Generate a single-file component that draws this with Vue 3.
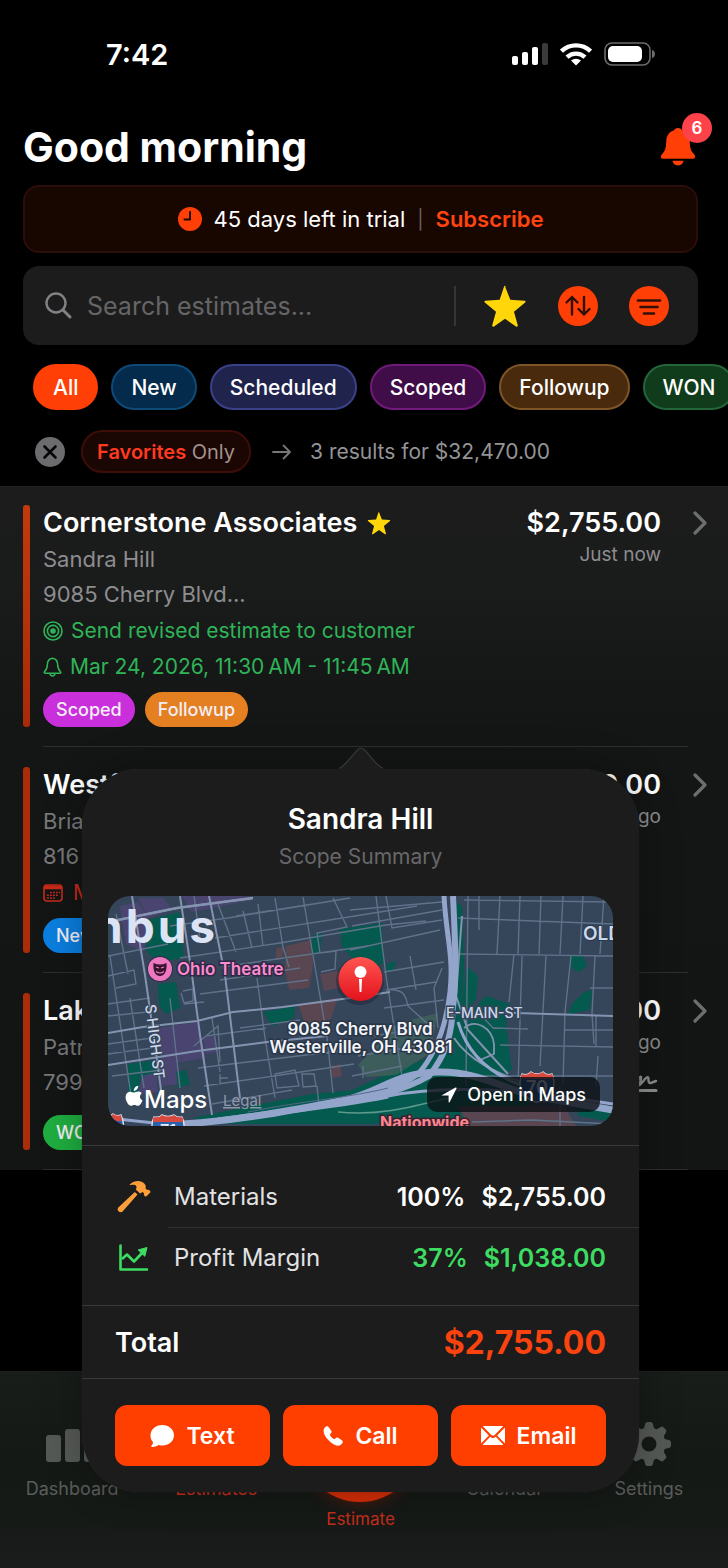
<script setup>
import { ref } from 'vue'

const query = ref('')

const filters = [
  { label: 'All', tone: 'all' },
  { label: 'New', tone: 'new' },
  { label: 'Scheduled', tone: 'scheduled' },
  { label: 'Scoped', tone: 'scoped' },
  { label: 'Followup', tone: 'followup' },
  { label: 'WON', tone: 'won' }
]

const estimates = [
  {
    company: 'Cornerstone Associates',
    favorite: true,
    contact: 'Sandra Hill',
    address: '9085 Cherry Blvd...',
    goal: 'Send revised estimate to customer',
    reminder: 'Mar 24, 2026, 11:30\u2009AM - 11:45\u2009AM',
    price: '$2,755.00',
    age: 'Just now',
    tags: [
      { label: 'Scoped', tone: 'scoped' },
      { label: 'Followup', tone: 'followup' }
    ]
  },
  {
    company: 'Westfield',
    contact: 'Brian',
    address: '816 Oak',
    due: 'Mar 24',
    price: '$9,120.00',
    age: '1 day ago',
    tags: [{ label: 'New', tone: 'new' }]
  },
  {
    company: 'Lakeside',
    contact: 'Patrick',
    address: '799 Elm',
    signed: true,
    price: '$20,595.00',
    age: '2 days ago',
    tags: [{ label: 'WON', tone: 'won' }]
  }
]

const starPath =
  'M12 1.2 14.9 8.6 22.8 9.1Q23.6 9.4 23 10.1L16.9 15.1 19 22.7Q18.9 23.6 18 23.2L12 19 6 23.2Q5.1 23.6 5 22.7L7.1 15.1 1 10.1Q.4 9.4 1.2 9.1L9.1 8.6 11.4 1.6Q12 .4 12.6 1.6Z'
</script>

<template>
  <div class="screen">
    <header class="status">
      <time class="clock">7:42</time>
      <div class="status-icons">
        <svg width="36" height="22" viewBox="0 0 36 22" aria-hidden="true">
          <rect x="0" y="13" width="6" height="9" rx="2" fill="#fff" />
          <rect x="10" y="9" width="6" height="13" rx="2" fill="#fff" />
          <rect x="20" y="4" width="6" height="18" rx="2" fill="#fff" />
          <rect x="30" y="0" width="6" height="22" rx="2" fill="#3a3a3a" />
        </svg>
        <svg width="32" height="24" viewBox="0 0 32 24" aria-hidden="true">
          <g fill="none" stroke="#fff" stroke-width="4.4">
            <path d="M1.5 9.2a21 21 0 0 1 29 0" />
            <path d="M7 15.2a13 13 0 0 1 18 0" />
          </g>
          <path d="M16 23.5 11 18.6a7.4 7.4 0 0 1 10 0z" fill="#fff" />
        </svg>
        <svg width="51" height="24" viewBox="0 0 51 24" aria-hidden="true">
          <rect x="1" y="1" width="45" height="22" rx="7" fill="none" stroke="#6b6b6b" stroke-width="1.6" />
          <rect x="4" y="4" width="34" height="16" rx="5" fill="#fff" />
          <path d="M48 8c4 1 4 7 0 8z" fill="#6b6b6b" />
        </svg>
      </div>
    </header>

    <div class="top">
      <div class="heading">
        <h1>Good morning</h1>
        <button class="bell" type="button" aria-label="Notifications, 6 unread">
          <svg width="34" height="38" viewBox="0 0 34 38" aria-hidden="true">
            <path d="M17 0c2.400 0 3.400 1 3.800 2.200 5 1.400 7.700 5.400 7.900 10.800.3 7.500 1.200 10 4.200 13 2.200 2.300 1.200 4.700-1.600 4.700H2.700c-2.800 0-3.800-2.400-1.600-4.700 3-3 3.900-5.500 4.200-13 .2-5.400 2.900-9.400 7.900-10.800C13.600 1 14.600 0 17 0z" />
            <path d="M11.500 32.800h11c-.4 2.800-2.600 4.700-5.500 4.700s-5.100-1.900-5.500-4.700z" />
          </svg>
          <span class="badge">6</span>
        </button>
      </div>

      <div class="trial">
        <svg width="24" height="24" viewBox="0 0 24 24" aria-hidden="true">
          <circle cx="12" cy="12" r="12" fill="#ff3f05" />
          <path d="M12 5v7.500H6.500" fill="none" stroke="#1a0700" stroke-width="2" stroke-linecap="round" stroke-linejoin="round" />
        </svg>
        <span>45 days left in trial</span>
        <span class="trial-bar">|</span>
        <a href="#subscribe">Subscribe</a>
      </div>

      <div class="search">
        <svg width="27" height="27" viewBox="0 0 27 27" aria-hidden="true">
          <circle cx="11" cy="11" r="9.500" fill="none" stroke="#828286" stroke-width="2.400" />
          <path d="m18 18 7 7" stroke="#828286" stroke-width="3" stroke-linecap="round" />
        </svg>
        <input v-model="query" type="text" placeholder="Search estimates..." aria-label="Search estimates" />
        <div class="search-tools">
          <button type="button" aria-label="Favorites">
            <svg width="44" height="44" viewBox="0 0 24 24"><path :d="starPath" fill="#ffd60a" /></svg>
          </button>
          <button type="button" aria-label="Sort">
            <svg width="40" height="40" viewBox="0 0 40 40">
              <circle cx="20" cy="20" r="20" fill="#ff3f05" />
              <path d="M14 28.500V11m-5.500 5.500L14 11l5.500 5.500M26 11v17.500m-5.500-5.500 5.500 5.500 5.500-5.500" fill="none" stroke="#321008" stroke-width="2.400" stroke-linecap="round" stroke-linejoin="round" />
            </svg>
          </button>
          <button type="button" aria-label="Filter">
            <svg width="40" height="40" viewBox="0 0 40 40">
              <circle cx="20" cy="20" r="20" fill="#ff3f05" />
              <path d="M9 14.500h22M11.500 21h17M15 27.500h10" fill="none" stroke="#321008" stroke-width="2.600" stroke-linecap="round" />
            </svg>
          </button>
        </div>
      </div>
    </div>

    <nav class="chips" aria-label="Status filters">
      <button v-for="f in filters" :key="f.label" type="button" class="chip" :class="'chip-' + f.tone">{{ f.label }}</button>
    </nav>

    <div class="active-filter">
      <button class="clear" type="button" aria-label="Clear filter">
        <svg width="30" height="30" viewBox="0 0 30 30">
          <circle cx="15" cy="15" r="15" fill="#6c6c6e" />
          <path d="m9.500 9.500 11 11m0-11-11 11" stroke="#050505" stroke-width="2.600" stroke-linecap="round" />
        </svg>
      </button>
      <button class="fav-only" type="button"><b>Favorites</b> Only</button>
      <svg class="arrow" width="20" height="16" viewBox="0 0 20 16" aria-hidden="true">
        <path d="M1 8h17m-6.500-6.500L18 8l-6.500 6.500" fill="none" stroke="#77777a" stroke-width="1.800" stroke-linecap="round" stroke-linejoin="round" />
      </svg>
      <span>3 results for $32,470.00</span>
    </div>

    <main class="list">
      <article v-for="e in estimates" :key="e.company" class="row">
        <div class="row-inner">
          <div class="accent"></div>
          <div class="info">
            <h2>
              {{ e.company }}
              <svg v-if="e.favorite" width="24" height="24" viewBox="0 0 24 24" aria-label="Favorite"><path :d="starPath" fill="#ffd60a" /></svg>
            </h2>
            <p class="contact">{{ e.contact }}</p>
            <p class="address">{{ e.address }}</p>
            <p v-if="e.goal" class="meta">
              <svg width="20" height="20" viewBox="0 0 20 20" fill="none" stroke="currentColor" stroke-width="1.600" aria-hidden="true">
                <circle cx="10" cy="10" r="9" /><circle cx="10" cy="10" r="5.600" /><circle cx="10" cy="10" r="2" fill="currentColor" />
              </svg>
              {{ e.goal }}
            </p>
            <p v-if="e.reminder" class="meta">
              <svg width="19" height="20" viewBox="0 0 19 20" fill="none" stroke="currentColor" stroke-width="1.500" stroke-linejoin="round" aria-hidden="true">
                <path d="M9.500 1.200c-3.200.5-5 2.700-5.100 6-.1 4.200-.8 5.500-2.900 7.600-.6.700-.2 1.400.6 1.400h14.800c.8 0 1.200-.7.6-1.400-2.100-2.100-2.800-3.400-2.900-7.600-.1-3.300-1.900-5.500-5.100-6zM7 16.500c.3 3.300 4.700 3.300 5 0" />
              </svg>
              {{ e.reminder }}
            </p>
            <p v-if="e.due" class="meta due">
              <svg width="20" height="18" viewBox="0 0 20 18" aria-hidden="true">
                <rect x="1" y="1" width="18" height="16" rx="3" fill="none" stroke="currentColor" stroke-width="1.600" />
                <path d="M1 3.500h18" stroke="currentColor" stroke-width="3.600" />
                <path d="M7 8.500h10M4 11.200h12M4 14h9" stroke="currentColor" stroke-width="1.400" stroke-dasharray="1.800 1.200" />
              </svg>
              {{ e.due }}
            </p>
            <div class="tags" :class="{ spaced: e.signed }">
              <span v-for="t in e.tags" :key="t.label" class="tag" :class="'tag-' + t.tone">{{ t.label }}</span>
            </div>
          </div>
          <div class="amount">
            <strong>{{ e.price }}</strong>
            <span>{{ e.age }}</span>
            <svg v-if="e.signed" width="28" height="20" viewBox="0 0 28 20" aria-label="Signed">
              <path d="M1 11 6 4q2.500-3 2 .5L6.500 11q3-2.500 5.500-6 3-3.500 3.500-.5-.5 5 2.500 4.500 2-1 5-2" fill="none" stroke="#8d8d90" stroke-width="2.400" stroke-linecap="round" stroke-linejoin="round" />
              <path d="M1 16.500h22" stroke="#8d8d90" stroke-width="3" stroke-linecap="round" />
            </svg>
          </div>
          <button class="chevron" type="button" :aria-label="'Open ' + e.company">
            <svg width="14" height="24" viewBox="0 0 14 24"><path d="m2 2 10 10L2 22" fill="none" stroke="#6d6e6e" stroke-width="3.200" stroke-linecap="round" stroke-linejoin="round" /></svg>
          </button>
        </div>
      </article>
    </main>

    <nav class="tabs" aria-label="Main">
      <a class="tab" href="#dashboard">
        <svg width="56" height="40" viewBox="0 0 56 40" aria-hidden="true">
          <rect x="2" y="11" width="15" height="27" rx="3" /><rect x="21" y="5" width="15" height="33" rx="3" /><rect x="40" y="0" width="15" height="38" rx="3" />
        </svg>
        <span>Dashboard</span>
      </a>
      <a class="tab current" href="#estimates">
        <svg width="40" height="40" viewBox="0 0 40 40" aria-hidden="true"><rect x="6" y="2" width="28" height="36" rx="4" /></svg>
        <span>Estimates</span>
      </a>
      <a class="tab create" href="#estimate">
        <i class="orb"></i>
        <span>Estimate</span>
      </a>
      <a class="tab" href="#calendar">
        <svg width="40" height="40" viewBox="0 0 40 40" aria-hidden="true"><rect x="3" y="4" width="34" height="32" rx="5" /></svg>
        <span>Calendar</span>
      </a>
      <a class="tab" href="#settings">
        <svg width="44" height="44" viewBox="-22 -22 44 44" aria-hidden="true">
          <g>
            <path v-for="n in 8" :key="n" :transform="'rotate(' + n * 45 + ')'" d="M-5.500-14-3.700-20.500Q-3.200-22-1.600-22h3.200q1.600 0 2.100 1.500L5.500-14z" />
          </g>
          <path fill-rule="evenodd" d="M0-16.500a16.500 16.500 0 1 1 0 33 16.500 16.500 0 1 1 0-33zm0 9a7.500 7.500 0 1 0 0 15 7.500 7.500 0 1 0 0-15z" />
        </svg>
        <span>Settings</span>
      </a>
    </nav>

    <section class="popover" aria-label="Scope summary">
      <svg class="pointer" width="48" height="23" viewBox="0 0 48 23" aria-hidden="true">
        <path d="M0 23C4 22 6 19 9 16L20 3.500q4-4.500 8 0L39 16c3 3 5 6 9 7z" fill="#1c1c1c" />
        <path d="M2 21.500C5 20 7 18 9 16L20 3.500q4-4.500 8 0L39 16c2 2 4 4 7 5.500" fill="none" stroke="#343635" stroke-width="1.200" />
      </svg>
      <h3>Sandra Hill</h3>
      <p class="sub">Scope Summary</p>

      <div class="map">
        <svg class="map-art" viewBox="0 0 505 230" preserveAspectRatio="xMidYMid slice" role="img" aria-label="Map of 9085 Cherry Blvd">
          <rect width="505" height="230" fill="#35455a" />
          <g fill="#4a4570">
            <path d="M12 10 30 6 40 22 36 56 18 48 14 26zM30 2h26l8 12-24 8zM74 0h62l8 4-60 12zM50 132l40-6 8 36-44 7zM95 141l12-1 3 16-12 2z" />
            <path d="M50 165l18-3 2 26-16 2zM28 176l20-2 2 22-22 2z" />
          </g>
          <g fill="#045a4e">
            <path d="M40 24 72 16 76 62 48 66 38 54zM50 88l18-2 4 26-14 6-7-8zM20 168l28-4 2 12-16 4-6 24-8-2zM68 176l10-2 4 14-12 4zM155 116l32-6-1 12-22 8zM204 40l10-3-2 20-8 2z" />
            <path d="M232 33l42-6 2 40-20 8-22-24zM278 68l10-3-2 10-7 2zM348 6l6 4 2 56-2 60 24-26 24 8-4 20 6 46-40 14-20-40zM358 70l12 10-2 24-14 14zM463 60l12 0 4 10-8 6-8-4zM476 96l8-2-2 20-22 4 4-10z" />
            <path d="M356 128l22-4 20 26-8 16-26-2zM84 222l60-12 60-12 40-4 30-14 60-24 30 0 50 32 10 26-60 6-70 8H124l-20-2z" />
            <path d="M470 208l35 4v14l-35-6z" />
          </g>
          <g fill="#40635c"><path d="M290 127l40-10-8 40-34 22-30 2-8-12z" opacity=".8" /></g>
          <g fill="#594651">
            <path d="M178 50l25-6 2 26-4 22-20 2-4-20zM168 52l8-1-2 12-6 1zM212 78l18-3 6 16-20 4zM190 108l40-6-8 22-24 6zM222 170l10-2 2 12-9 2z" />
            <path d="M350 210h106l12 20H360z" />
          </g>
          <g fill="none" stroke="#5f7289" stroke-width="1.400">
            <path d="M0 60 60 48M0 80l26-6 2 14-20 4M2 60l6 40 16 106M8 18l12 60M0 108l42-6M0 120l40-4M22 102l14 90M0 148l44-6M0 158l44-6M4 180l50-6M62 30l58-8 122-20M72 62l100-15 70-12 36-6 40-4M107 42l140-22 62-10M120 70l140-20M92 98l108-14M75 95l10-2 0 12-9 2-3-10M76 108l20-2M112 84l80-12M86 150 110 130l2 36M98 140l60-8M104 122l8 54M90 172l150-18M96 190l70-10 80-12M104 208l80-14M112 178v10m0-6h8M132 132l60-8M149 82l8 60 10 60M167 2l8 49 6 20M195 1l12 70 12 70 6 56M225 2l14 29-30 6 3 20 16-2-1 18-14 3M110 8l18 48M135 15l9 37M86 0l6 44M150 8l5 42M62 102l10 90M128 20l90-14" />
            <path d="M167 178l20-4 4 16-22 2zM194 178h12l2 12-13 1zM209 190l2 20" />
            <path d="M242 14 334 6M244 30 334 14M242 54l90-20M268 0l10 80 16 100M278 0l6 32 50-8M276 76l60-10M278 94l50-8M302 60l6 34M276 112l60-8M266 140l60-10M250 160l60-10M244 180l50-10M255 170v12M334 72l-8 20 4 40M278 94c18-2 20 6 22 16l22 20" />
            <path d="M350 22l155 6M350 58l155 2M360 0l-2 190M371 0v34M392 0l-3 58M412 0l-2 58M433 0l-2 58M455 0l-3 58M475 0l-3 58M496 0l-4 58M406 58l-5 48M414 60l-4 130M438 60l-6 110M463 60l-6 56-2 72M487 60l-3 58 2 30M482 92h23M356 4l149 2M392 149l113 2M386 132l34 1M370 116l16 17M456 134h50M488 120v30M490 160l-2 30M350 180h155M364 226l60-2 80 4M452 190v40" />
          </g>
          <g fill="none" stroke="#8494b0" stroke-width="2.400">
            <path d="M24 0l13 79 10 70 8 60M72 0l12 79 8 60 12 80M101 0l16 79 15 123M0 26l69-14 76-10M0 137l35-6 54-6 36-9 50-5 67-9 40-6M0 169l89-14 70-9 60-6M376 116l129 4M354 20l-6 80 12 34 40 44M346 142c20 30 60 40 76 48" stroke-width="2" />
            <path d="M0 26l69-14 76-10" />
            <path d="M356 132c12-10 28 0 30 16v10l-14 6" stroke-width="1.800" />
          </g>
          <g fill="none" stroke="#93a5cb">
            <path d="M336 0c2 40 10 60 6 96-4 34-14 62-32 82-18 14-50 24-84 28" stroke-width="5" />
            <path d="M345 0c2 40 4 80 0 112-2 34-10 50-24 68-24 14-60 24-95 27" stroke-width="6" />
            <path d="M75 228c60-4 110-14 158-23 40-8 52-28 96-29 40-1 66 16 96 24l80 14" stroke-width="7" />
            <path d="M110 224c70-10 110-12 170-24" stroke-width="5" />
            <path d="M280 200c40-8 100-12 225 8" stroke-width="3" />
            <path d="M350 126c10 34 36 54 66 64" stroke-width="3" />
            <path d="M0 222l74 8" stroke-width="3" />
          </g>
          <path d="M140 216c60-12 100-14 140-24" fill="none" stroke="#55688a" />
          <path d="M230 216c40 4 70-4 110-14" fill="none" stroke="#5d9a8c" stroke-width="1.400" />
          <g font-family="Inter, sans-serif">
            <text x="-14" y="47" font-size="46" font-weight="700" fill="#dbe3f5" letter-spacing="3">nbus</text>
            <g>
              <circle cx="52" cy="73" r="13" fill="#2c2f49" />
              <circle cx="52" cy="73" r="12" fill="#ee78c0" />
              <path d="M45.500 67q3.500 1.500 6.500 1.500t6.500-1.500c.6 6-.8 13-6.500 13s-7.100-7-6.500-13z" fill="#3b1430" />
              <path d="m48 71 3 1m5-1-3 1m-5 3.500q4 3 8 0" stroke="#ee78c0" stroke-width="1.200" fill="none" />
            </g>
            <text x="69" y="79" font-size="17" font-weight="600" fill="#ff8bd0" stroke="#2d2a45" stroke-width="3" paint-order="stroke">Ohio Theatre</text>
            <text transform="translate(37 109) rotate(83)" font-size="15" font-weight="500" fill="#cdd7ea" stroke="#35455a" stroke-width="2" paint-order="stroke">S HIGH ST</text>
            <text x="338" y="122" font-size="14" font-weight="500" fill="#cdd7ea" stroke="#35455a" stroke-width="3" paint-order="stroke">E-MAIN-ST</text>
            <text x="475" y="44" font-size="19" font-weight="600" fill="#cdd7ea" stroke="#2c3a4d" stroke-width="2" paint-order="stroke">OLD</text>
            <text x="272" y="232" font-size="16" font-weight="700" fill="#ff858f" stroke="#3a2230" stroke-width="3" paint-order="stroke">Nationwide</text>
            <g font-size="17" font-weight="600" fill="#f1f4fa" stroke="#2a3546" stroke-width="3" paint-order="stroke" text-anchor="middle">
              <text x="252" y="139">9085 Cherry Blvd</text>
              <text x="253" y="157">Westerville, OH 43081</text>
            </g>
            <g>
              <path d="M414 178q6 2 9-2 6 4 12 0 3 4 9 2 4 10 0 16c-2 8-12 12-15 12s-13-4-15-12q-4-6 0-16z" fill="#1d4f9c" stroke="#dfe3ea" stroke-width="1.400" />
              <path d="M413 183q-1-3 1-5 6 2 9-2 6 4 12 0 3 4 9 2 2 2 1 5z" fill="#d8493f" />
              <text x="429" y="198" font-size="18" font-weight="600" fill="#e6ebf5" text-anchor="middle">70</text>
              <path d="M46 221q6 1 8-2 6 3 12 0 3 3 8 2 4 8 0 16H46q-4-8 0-16z" fill="#2b62ae" stroke="#dfe3ea" stroke-width="1.400" />
              <path d="M45 226q-1-3 1-5 6 1 8-2 6 3 12 0 3 3 8 2 2 2 1 5z" fill="#d8493f" />
              <text x="60" y="240" font-size="16" font-weight="600" fill="#e6ebf5" text-anchor="middle">71</text>
              <path d="M-4 220q6 1 9-2 4 3 8 1 4 8 2 18H-4z" fill="#2b62ae" stroke="#dfe3ea" stroke-width="1.400" />
              <path d="M-4 220q6 1 9-2 4 3 8 1l1 6H-4z" fill="#d8493f" />
            </g>
            <g fill="#fff">
              <path d="M27.500 196c2.500-1 4.800-.6 6.300 1.200-2.600 1.800-2.400 5.700.7 7-1 3-2.800 5.600-4.600 5.600-1.400 0-1.800-.8-3.500-.8s-2.200.8-3.500.8c-2.500 0-5.500-5.200-5.300-9 .3-4.500 4-6 6.700-4.600 1.300.6 2 .3 3.200-.2zM25.800 195c-.2-2.600 2-5 4.400-5.200.3 2.700-1.900 5.100-4.400 5.200z" />
              <text x="36" y="212" font-size="24" font-weight="500">Maps</text>
            </g>
            <text x="115" y="210" font-size="15" fill="#8e9aab" text-decoration="underline">Legal</text>
          </g>
          <defs>
            <linearGradient id="pin" x1="0" y1="0" x2="0" y2="1"><stop offset="0" stop-color="#ff5650" /><stop offset="1" stop-color="#e3121c" /></linearGradient>
          </defs>
          <circle cx="252" cy="85" r="24" fill="#1c2433" opacity=".45" />
          <circle cx="252.500" cy="83" r="22" fill="url(#pin)" />
          <circle cx="252.500" cy="76" r="6" fill="#fff" />
          <path d="M251 83h3l-.6 13h-1.800z" fill="#fff" />
        </svg>
        <a class="open-maps" href="#maps">
          <svg width="16" height="16" viewBox="0 0 16 16" aria-hidden="true"><path d="M.8 8.200 14.600.5q1.300-.4.900.9L8.600 15.200q-.9 1-1-.4V8.500H1.200Q-.2 8.600.8 8.200z" fill="#fff" /></svg>
          Open in Maps
        </a>
      </div>

      <div class="lines">
        <div class="line">
          <svg width="34" height="34" viewBox="0 0 34 34" aria-hidden="true">
            <path d="M20.500 14.500 5.800 31.200c-2.600 2.900-7-1.200-4.200-4L17.800 12z" fill="#ff9f3c" />
            <path d="M13 4.200c5-4.200 11-4 14.500-.4 1.500 1.600 1.300 3 1.100 4.600l1.500 1.500c1-.4 2 0 2.800.8.700.8.700 1.300.1 2l-3.200 3.400c-.7.700-1.500.6-2.200-.1-.8-.8-.9-1.800-.6-2.700l-1.400-1.400-2.600 1.700-4.200-4.200c1.600-2.300.5-4.300-1.700-4.600-1.400-.2-2.700.1-3.700.2-.9 0-1-.4-.4-.8z" fill="#ff9f3c" />
          </svg>
          <span class="line-name">Materials</span>
          <b>100%</b><b>$2,755.00</b>
        </div>
        <div class="line profit">
          <svg width="34" height="28" viewBox="0 0 34 28" aria-hidden="true">
            <path d="M3.500 1.500v24h26.500" fill="none" stroke="#3ddc62" stroke-width="2.600" stroke-linecap="round" stroke-linejoin="round" />
            <path d="m5 15 5-4.500 7 7L26 8" fill="none" stroke="#3ddc62" stroke-width="2.600" stroke-linejoin="round" />
            <path d="m30 3.500-2.200 8.800-6.600-6.400z" fill="#3ddc62" stroke="#3ddc62" stroke-linejoin="round" />
          </svg>
          <span class="line-name">Profit Margin</span>
          <b>37%</b><b>$1,038.00</b>
        </div>
      </div>

      <div class="total">
        <span>Total</span>
        <strong>$2,755.00</strong>
      </div>

      <div class="actions">
        <button type="button">
          <svg width="24" height="22" viewBox="0 0 24 22" aria-hidden="true"><path d="M12.300 0C19 0 24 4.500 24 10.300s-5 10.200-11.700 10.200c-1.500 0-2.600-.1-3.700-.5C6.500 21.500 4 22.100 2 21.900c-.8-.1-.9-.8-.4-1.300 1.100-1.100 1.500-2.200 1.300-3.500C1.200 15.300.5 13 .5 10.300.5 4.500 5.600 0 12.300 0z" /></svg>
          Text
        </button>
        <button type="button">
          <svg width="20" height="20" viewBox="0 0 20 20" aria-hidden="true"><path d="M1.300 2.200C3-.2 4.700-.3 5.900 1.400l2.200 3.200c.8 1.200.6 2-.5 3.100-.8.800-.9 1.100-.3 2 .9 1.200 1.900 2.200 3 3 .9.600 1.300.5 2-.3 1.100-1.100 1.900-1.300 3.100-.5l3.200 2.200c1.700 1.200 1.700 2.900-.8 4.600-2.400 1.800-6.400 1.500-11.500-3.600C1 9.900-.5 5.200 1.300 2.200z" /></svg>
          Call
        </button>
        <button type="button">
          <svg width="24" height="19" viewBox="0 0 24 19" aria-hidden="true"><path d="M1.800.3Q2.400 0 3 0h18q.6 0 1.200.3L13.600 9q-1.600 1.500-3.200 0zM.3 1.800 7.900 9.500.3 17.200Q0 16.800 0 16V3q0-.8.300-1.200zM23.700 1.800 16.100 9.500l7.600 7.700q.3-.4.300-1.200V3q0-.8-.3-1.200zM9.200 10.800q2.800 2.600 5.600 0l7.400 7.700Q21.600 19 21 19H3q-.6 0-1.200-.5z" /></svg>
          Email
        </button>
      </div>
    </section>
  </div>
</template>

<style>
body {
  background: #000;
}
</style>

<style scoped>
* {
  box-sizing: border-box;
  margin: 0;
}

.screen {
  position: relative;
  display: flex;
  flex-direction: column;
  min-height: 100vh;
  overflow: hidden;
  background: #000;
  color: #fff;
  font-family: Inter, "Liberation Sans", sans-serif;
}

button {
  padding: 0;
  border: 0;
  background: none;
  color: inherit;
  font: inherit;
  cursor: pointer;
}

a {
  color: inherit;
  text-decoration: none;
}

svg {
  display: block;
  flex: none;
}

.status {
  display: flex;
  align-items: center;
  justify-content: space-between;
  height: 108px;
  padding: 0 73px 0 106px;
}

.clock {
  font-size: 29px;
  font-weight: 600;
}

.status-icons {
  display: flex;
  align-items: center;
  gap: 12px;
}

.top {
  display: flex;
  flex-direction: column;
  padding: 0 30px 0 23px;
}

.heading {
  display: flex;
  align-items: center;
  justify-content: space-between;
  height: 77px;
  padding-right: 3px;
}

h1 {
  font-size: 41px;
  font-weight: 700;
}

.bell {
  position: relative;
  fill: #ff3f05;
}

.badge {
  position: absolute;
  top: -15px;
  right: -17px;
  width: 30px;
  height: 30px;
  border-radius: 50%;
  background: #fd4249;
  color: #fff;
  font-size: 17px;
  font-weight: 600;
  line-height: 30px;
}

.trial {
  display: flex;
  align-items: center;
  justify-content: center;
  gap: 12px;
  height: 68px;
  border: 2px solid #2b0d0a;
  border-radius: 16px;
  background: #180601;
  font-size: 22px;
}

.trial-bar {
  color: #69615f;
  font-size: 19px;
}

.trial a {
  color: #ff4410;
  font-weight: 600;
}

.search {
  display: flex;
  align-items: center;
  gap: 15px;
  height: 79px;
  margin-top: 13px;
  padding: 0 29px 0 22px;
  border-radius: 16px;
  background: #1c1c1c;
}

.search input {
  flex: 1;
  min-width: 0;
  padding: 0;
  border: 0;
  outline: 0;
  background: none;
  color: #fff;
  font: inherit;
  font-size: 25px;
}

.search input::placeholder {
  color: #656568;
  opacity: 1;
}

.search-tools {
  display: flex;
  align-items: center;
  gap: 31px;
  height: 40px;
  padding-left: 27px;
  border-left: 2px solid #363638;
}

.chips {
  display: flex;
  gap: 13px;
  margin-top: 19px;
  padding-left: 33px;
  overflow: hidden;
}

.chip {
  flex: none;
  height: 46px;
  padding: 0 18px;
  border: 2px solid;
  border-radius: 23px;
  font-size: 21px;
  font-weight: 500;
}

.chip-all { border-color: #ff3f05; background: #ff3f05; }
.chip-new { border-color: #0e4a78; background: #042b4c; }
.chip-scheduled { border-color: #3b4188; background: #20244d; }
.chip-scoped { border-color: #721a7c; background: #400d48; }
.chip-followup { border-color: #7d5526; background: #492a0d; }
.chip-won { border-color: #22663a; background: #103c1b; }

.active-filter {
  display: flex;
  align-items: center;
  height: 43px;
  margin: 20px 0 13px;
  padding-left: 35px;
  color: #949497;
  font-size: 21px;
}

.fav-only {
  height: 43px;
  margin-left: 16px;
  padding: 0 14px;
  border: 2px solid #3d0d08;
  border-radius: 22px;
  background: #1a0602;
  color: #a1928e;
  font-size: 20px;
}

.fav-only b {
  color: #ff3b1f;
  font-weight: 600;
}

.arrow {
  margin: 0 18px 0 21px;
}

.list {
  border-top: 1px solid #202121;
  background: linear-gradient(#1c1c1c, #1a1b1b 15%, #131615 35%, #121514);
}

.row {
  position: relative;
  padding: 18px 21px 0 23px;
}

.row + .row {
  padding-top: 20px;
}

.row::after {
  content: "";
  display: block;
  height: 1px;
  margin: 19px 19px 0 20px;
  background: #2c2e2e;
}

.row-inner {
  display: flex;
}

.accent {
  width: 7px;
  border-radius: 3px;
  background: #ab2c08;
}

.row:first-child .accent {
  background: linear-gradient(#c23a0c, #a82a08);
}

.info {
  flex: 1;
  margin-left: 13px;
}

h2 {
  display: flex;
  align-items: center;
  gap: 10px;
  font-size: 27px;
  font-weight: 600;
  line-height: 36px;
}

.contact,
.address {
  color: #8d8d8f;
  font-size: 22px;
  line-height: 36px;
}

.address {
  padding-bottom: 2px;
  line-height: 34px;
}

.row + .row p {
  color: #79797b;
}

.meta {
  display: flex;
  align-items: center;
  gap: 8px;
  color: #2fb457;
  font-size: 21px;
  line-height: 36px;
}

.row + .row .due {
  gap: 10px;
  color: #c92a19;
}

.tags {
  display: flex;
  gap: 10px;
  margin-top: 7px;
}

.tags.spaced {
  margin-top: 14px;
}

.tag {
  height: 35px;
  padding: 0 13px;
  border-radius: 18px;
  color: #f4eef5;
  font-size: 18px;
  font-weight: 500;
  line-height: 35px;
}

.tag-scoped { background: #c930dc; }
.tag-followup { background: #e47f22; }
.tag-new { background: #0b7fe0; }
.tag-won { background: #1fae40; }

.amount {
  display: flex;
  flex-direction: column;
  align-items: flex-end;
  color: #8d8d8f;
}

.amount strong {
  color: #fff;
  font-size: 27px;
  font-weight: 600;
  line-height: 36px;
}

.amount span {
  font-size: 19px;
  line-height: 28px;
}

.amount svg {
  margin-top: 17px;
}

.chevron {
  align-self: flex-start;
  height: 36px;
  margin-left: 32px;
}

.tabs {
  display: grid;
  grid-template-columns: repeat(5, 1fr);
  height: 197px;
  margin-top: auto;
  padding: 50px 7px 0 0;
  border-top: 1px solid #1c201d;
  background: linear-gradient(#181d1a, #151916 45%, #161a17 75%, #1b1c1c);
}

.tab {
  display: flex;
  flex-direction: column;
  align-items: center;
  color: #5a5d5b;
  fill: #555956;
  font-size: 18px;
}

.tab svg {
  height: 44px;
}

.tab span {
  margin-top: 11px;
  line-height: 24px;
}

.tab.current {
  color: #c42d1a;
  fill: #c42d1a;
}

.tab.create {
  color: #c42d1a;
  font-size: 17px;
}

.orb {
  width: 120px;
  height: 120px;
  margin-top: -40px;
  border-radius: 50%;
  background: #d52e06;
  box-shadow: 0 2px 14px #8a1e0680;
}

.tab.create span {
  margin-top: 5px;
}

.popover {
  position: absolute;
  top: 769px;
  left: 82px;
  right: 89px;
  padding-top: 30px;
  border-radius: 58px;
  background: #1c1c1c;
  box-shadow: 0 0 40px #0000004d, 0 0 1px #3a3a3a;
}

.pointer {
  position: absolute;
  top: -22px;
  left: calc(50% - 24px);
}

h3 {
  font-size: 28px;
  font-weight: 600;
  line-height: 40px;
  text-align: center;
}

.sub {
  color: #68686a;
  font-size: 21px;
  line-height: 36px;
  text-align: center;
}

.map {
  position: relative;
  height: 230px;
  margin: 21px 26px 19px;
  border-radius: 22px;
  overflow: hidden;
}

.map-art {
  width: 100%;
  height: 100%;
}

.open-maps {
  position: absolute;
  right: 13px;
  bottom: 14px;
  display: flex;
  align-items: center;
  gap: 10px;
  height: 35px;
  padding: 0 14px;
  border-radius: 10px;
  background: #0c1015cc;
  font-size: 18px;
  font-weight: 500;
}

.lines {
  padding: 20px 0 17px;
  border-top: 1px solid #38393a;
  border-bottom: 1px solid #38393a;
}

.line {
  position: relative;
  display: flex;
  align-items: center;
  gap: 16px;
  height: 61px;
  padding: 0 33px 0 35px;
}

.profit::before {
  content: "";
  position: absolute;
  top: 0;
  left: 86px;
  right: 0;
  height: 1px;
  background: #313233;
}

.line-name {
  flex: 1;
  margin-left: 7px;
  color: #e2e2e4;
  font-size: 24px;
}

.line b {
  font-size: 25px;
  font-weight: 600;
}

.profit b {
  color: #3ddc62;
}

.total {
  display: flex;
  align-items: center;
  justify-content: space-between;
  height: 73px;
  padding: 0 33px;
  border-bottom: 1px solid #38393a;
  font-size: 27px;
  font-weight: 600;
}

.total strong {
  color: #fb430f;
  font-size: 32px;
  font-weight: 700;
}

.actions {
  display: grid;
  grid-template-columns: repeat(3, 1fr);
  gap: 13px;
  padding: 26px 33px;
}

.actions button {
  display: flex;
  align-items: center;
  justify-content: center;
  gap: 12px;
  height: 61px;
  border-radius: 12px;
  background: #ff3f00;
  fill: #fff;
  font-size: 23px;
  font-weight: 600;
}
</style>
